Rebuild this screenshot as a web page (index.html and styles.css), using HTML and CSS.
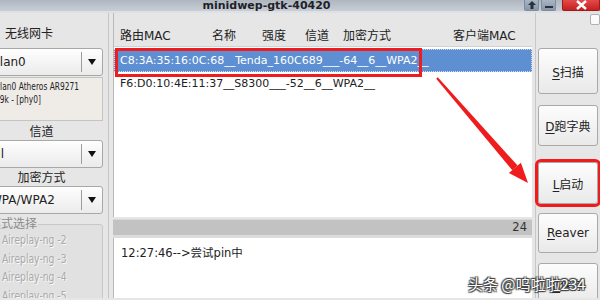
FILE: index.html
```html
<!DOCTYPE html>
<html>
<head>
<meta charset="utf-8">
<link rel="stylesheet" href="styles.css">
</head>
<body>
<div class="titlebar">
  <div class="title"><span>minidwep-gtk-40420</span></div>
  <div class="wbtns">
    <span class="wb up"><svg width="14" height="10" viewBox="0 0 14 10"><path d="M7 1 L11 5 L8.5 5 L8.5 9 L5.5 9 L5.5 5 L3 5 Z" fill="#2a2f38"/></svg></span>
    <span class="wb min"><svg width="14" height="10" viewBox="0 0 14 10"><rect x="3" y="6" width="8" height="2" fill="#2a2f38"/></svg></span>
    <span class="wb close"><svg width="37" height="10" viewBox="0 0 37 10"><path d="M14 1 L23 9 M23 1 L14 9" stroke="#fff" stroke-width="2.4"/></svg></span>
  </div>
</div>
<div class="main">
  <div class="left">
    <div class="lbl first">无线网卡</div>
    <div class="combo"><span class="ctext">wlan0</span><span class="csep"></span><span class="carrow"></span></div>
    <div class="info"><div class="il">wlan0 Atheros AR9271</div><div class="il l2">ath9k - [phy0]</div></div>
    <div class="lbl center">信道</div>
    <div class="combo"><span class="ctext">all</span><span class="csep"></span><span class="carrow"></span></div>
    <div class="lbl center">加密方式</div>
    <div class="combo"><span class="ctext">WPA/WPA2</span><span class="csep"></span><span class="carrow"></span></div>
    <fieldset class="frame">
      <legend>模式选择</legend>
      <div class="opt"><span class="radio"></span><span class="ot">Aireplay-ng -2</span></div>
      <div class="opt"><span class="radio"></span><span class="ot">Aireplay-ng -3</span></div>
      <div class="opt"><span class="radio"></span><span class="ot">Aireplay-ng -4</span></div>
      <div class="opt"><span class="radio"></span><span class="ot">Aireplay-ng -5</span></div>
    </fieldset>
  </div>
  <div class="vdiv"></div>
  <div class="center-col">
    <div class="list">
      <div class="thead">
        <span class="h1">路由MAC</span><span class="h2">名称</span><span class="h3">强度</span><span class="h4">信道</span><span class="h5">加密方式</span><span class="h6">客户端MAC</span>
      </div>
      <div class="rows">
        <div class="row sel">C8:3A:35:16:0C:68__Tenda_160C689___-64__6__WPA2__</div>
        <div class="row">F6:D0:10:4E:11:37__S8300___-52__6__WPA2__</div>
      </div>
    </div>
    <div class="bar"><span>24</span></div>
    <div class="log">12:27:46--&gt;尝试pin中</div>
  </div>
  <div class="vdiv2"></div>
  <div class="right">
    <div class="tiny"></div>
    <div class="btn b1"><span><u>S</u>扫描</span></div>
    <div class="btn b2"><span><u>D</u>跑字典</span></div>
    <div class="btn b3 marked"><span><u>L</u>启动</span></div>
    <div class="btn b4"><span><u>R</u>eaver</span></div>
    <div class="btn b5"><span><u>B</u>保存</span></div>
  </div>
</div>
<div class="redbox"></div>
<svg class="arrow" width="600" height="300" viewBox="0 0 600 300">
  <polygon points="436.2,78.7 437.8,77.3 517.6,165.6 512.3,170.2" fill="#ee1c1c"/>
  <polygon points="528,183 508.9,173.1 520.9,162.7" fill="#ee1c1c"/>
</svg>
<div class="watermark">头条 @呜啦啦234</div>
</body>
</html>
```
FILE: styles.css
```css
* { box-sizing: border-box; }
html, body { margin: 0; padding: 0; }
body {
  width: 600px;
  height: 300px;
  overflow: hidden;
  position: relative;
  background: #e6e6e6;
  font-family: "DejaVu Sans", "Noto Sans CJK SC", sans-serif;
  font-size: 11px;
  color: #222;
}
.titlebar {
  height: 13px;
  display: flex;
  background: linear-gradient(#aeb6c0, #c9ced5);
  border-bottom: 2px solid #dde1e5;
  overflow: hidden;
}
.title {
  flex: 1;
  text-align: center;
  padding-left: 9px;
  font-weight: bold;
  font-size: 11px;
  line-height: 11px;
  color: #1e2228;
}
.title span { display: inline-block; margin-top: -3px; }
.wbtns { display: flex; gap: 2px; height: 11px; }
.wb {
  display: block;
  height: 11px;
  border: 1px solid #7f8c9c;
  border-top: none;
  border-radius: 0 0 2px 2px;
  background: linear-gradient(#a7b4c4, #8797aa);
}
.wb svg { display: block; }
.wb.up, .wb.min { width: 15px; }
.wb.close {
  width: 38px;
  margin-left: 4px;
  background: linear-gradient(#e44a4a, #c42020);
  border-color: #a01818;
}
.main {
  display: flex;
  height: 285px;
  overflow: hidden;
}
.left {
  margin-left: -24px;
  width: 127px;
  flex: none;
  padding-top: 13px;
}
.lbl { line-height: 16px; height: 16px; font-size: 12px; }
.lbl.first { padding-left: 29px; margin-bottom: 6px; }
.lbl.center { text-align: center; padding-left: 4px; }
.combo {
  height: 28px;
  display: flex;
  align-items: center;
  border: 1px solid #a8a8a8;
  border-radius: 3px;
  background: linear-gradient(#fefefe, #ebebeb);
  font-size: 12px;
}
.ctext { flex: 1; padding-left: 13px; }
.csep { width: 1px; height: 20px; background: #9c9c9c; }
.carrow {
  width: 20px;
  display: flex;
  justify-content: center;
}
.carrow::before {
  content: "";
  border-left: 4.5px solid transparent;
  border-right: 4.5px solid transparent;
  border-top: 6px solid #111;
}
.info {
  margin-top: 1px;
  height: 44px;
  background: #efece8;
  border: 1px solid #c4c4c4;
  padding: 2px 0 0 17px;
  line-height: 13px;
  font-size: 11px;
  margin-bottom: 3px;
  overflow: hidden;
}
.il {
  white-space: nowrap;
  transform: scaleX(0.68);
  transform-origin: 0 0;
}
.info .l2 { text-indent: -9.5px; }
.combo + .lbl { margin-top: 2px; }
.frame {
  margin: 4px 0 0 0;
  padding: 0 0 0 11px;
  border: 1px solid #c8c8c8;
  border-radius: 3px;
  height: 100px;
  background: #e1e1e1;
}
.frame legend {
  padding: 0 1px;
  color: #8c8c8c;
  font-size: 12px;
  line-height: 13px;
}
.opt {
  height: 18.5px;
  line-height: 18.5px;
  color: #a9a9a9;
  text-shadow: 1px 1px 0 #fafafa;
  font-size: 11.5px;
  margin-left: 14px;
  display: flex;
  align-items: center;
  white-space: nowrap;
}
.ot {
  display: inline-block;
  transform: scaleX(0.8);
  transform-origin: 0 50%;
}
.radio {
  flex: none;
  width: 12px; height: 12px;
  border-radius: 50%;
  border: 1px solid #b8b8b8;
  margin-left: -16px;
  margin-right: 4px;
}
.vdiv {
  width: 10px;
  flex: none;
  display: flex;
  justify-content: center;
}
.vdiv::before { content: ""; width: 1px; background: #c6c6c6; }
.center-col {
  width: 419px;
  flex: none;
  display: flex;
  flex-direction: column;
}
.list {
  height: 204px;
  display: flex;
  flex-direction: column;
  border-left: 1px solid #b9b9b9;
}
.thead {
  height: 34px;
  flex: none;
  display: flex;
  padding: 15px 0 0 6px;
  font-size: 12px;
  line-height: 16px;
  border-bottom: 1px solid #d2d2d2;
}
.thead span { flex: none; }
.h1 { width: 92px; }
.h2 { width: 50px; }
.h3 { width: 43px; }
.h4 { width: 38px; }
.h5 { width: 110px; }
.rows {
  flex: 1;
  background: #fff;
  padding-top: 2px;
}
.row {
  height: 23px;
  line-height: 23px;
  padding-left: 6px;
  white-space: nowrap;
  font-size: 11px;
}
.row.sel {
  background: #5d8fd2;
  color: #fff;
  border: 1px dotted #c9dcf2;
  line-height: 21px;
  padding-left: 5px;
}
.bar {
  margin-top: 2px;
  height: 19px;
  border-top: 1px solid #d8d8d8;
  border-bottom: 3px solid #dcdcdc;
  background: #c2c2c2;
  text-align: right;
  padding-right: 5px;
  line-height: 15px;
  font-size: 11.5px;
  color: #333;
}
.log {
  flex: 1;
  background: #fff;
  border-left: 1px solid #b9b9b9;
  padding: 7px 0 0 7px;
  line-height: 16px;
  font-size: 11.5px;
}
.vdiv2 {
  width: 6px;
  flex: none;
  display: flex;
  justify-content: center;
}
.vdiv2::before { content: ""; width: 1px; background: #c8c8c8; }
.right {
  width: 60px;
  flex: none;
  display: flex;
  flex-direction: column;
}
.tiny {
  flex: none;
  width: 10px;
  height: 11px;
  margin-top: 1px;
  align-self: flex-end;
  margin-right: -2px;
  background: #fbfbfb;
  border: 1px solid #b0b0b0;
  border-radius: 2px;
}
.btn {
  flex: none;
  display: flex;
  align-items: center;
  justify-content: center;
  border: 1px solid #a9a9a9;
  border-radius: 3px;
  background: linear-gradient(#fdfdfd, #e9e9e9);
  font-size: 12px;
  color: #222;
}
.b1 { margin-top: 23px; height: 46px; }
.b2 { margin-top: 11px; height: 41px; }
.b3 { margin-top: 16px; height: 42px; }
.b4 { margin-top: 9px; height: 40px; }
.b5 { margin-top: 10px; height: 42px; }
.btn u { text-underline-offset: 2px; }
.btn.marked { outline: 3px solid #ee1c1c; outline-offset: 0; }
.redbox {
  position: absolute;
  left: 115px;
  top: 48px;
  width: 307px;
  height: 29px;
  border: 3px solid #ee1c1c;
}
.arrow { position: absolute; left: 0; top: 0; }
.watermark {
  position: absolute;
  left: 468px;
  top: 274px;
  font-size: 15px;
  line-height: 20px;
  color: #fff;
  font-family: "Noto Sans CJK SC", "DejaVu Sans", sans-serif;
  text-shadow: 0 0 1px #333, 1px 1px 1px #444, -1px -1px 1px #444, 1px -1px 1px #444, -1px 1px 1px #444;
}
```
